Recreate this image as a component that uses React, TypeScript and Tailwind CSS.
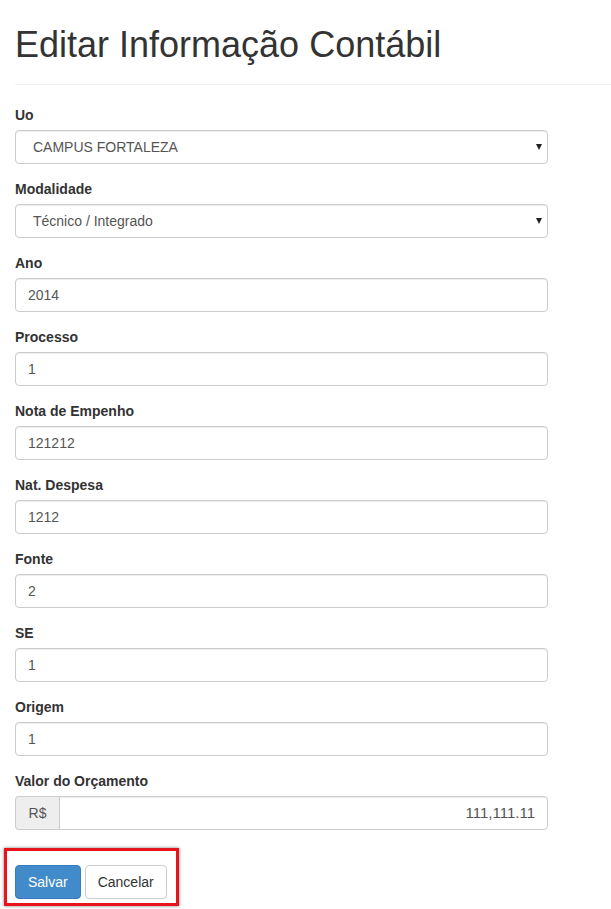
import React from "react";

const fields = [
  { label: "Ano", value: "2014" },
  { label: "Processo", value: "1" },
  { label: "Nota de Empenho", value: "121212" },
  { label: "Nat. Despesa", value: "1212" },
  { label: "Fonte", value: "2" },
  { label: "SE", value: "1" },
  { label: "Origem", value: "1" },
];

const inputCls =
  "block w-full h-[34px] px-3 py-1.5 text-sm text-[#555] bg-white border border-[#ccc] rounded shadow-[inset_0_1px_1px_rgba(0,0,0,0.075)] outline-none";

const Label = ({ children }: { children: React.ReactNode }) => (
  <label className="block mb-[5px] text-sm leading-5 font-bold text-[#333]">
    {children}
  </label>
);

const SelectBox = ({ value }: { value: string }) => (
  <div className="relative">
    <div className={inputCls + " pl-[17px] leading-5"}>{value}</div>
    <svg
      className="absolute right-[6px] top-[14px]"
      width="6"
      height="6"
      viewBox="0 0 6 6"
    >
      <path d="M0 0h6L3 6z" fill="#222" />
    </svg>
  </div>
);

const App = () => {
  return (
    <div
      className="min-h-screen bg-white text-sm text-[#333]"
      style={{ fontFamily: '"Liberation Sans", Arial, sans-serif' }}
    >
      <div className="pl-[15px] pt-[25px]">
        <div className="border-b border-[#eee] pb-[9px]">
          <h1 className="text-[36px] leading-[1.1] font-normal text-[#333] mb-[10px]">
            Editar Informação Contábil
          </h1>
        </div>
      </div>

      <form className="pl-[15px] pt-5 w-[548px]">
        <div className="mb-[15px]">
          <Label>Uo</Label>
          <SelectBox value="CAMPUS FORTALEZA" />
        </div>
        <div className="mb-[15px]">
          <Label>Modalidade</Label>
          <SelectBox value="Técnico / Integrado" />
        </div>

        {fields.map((f) => (
          <div key={f.label} className="mb-[15px]">
            <Label>{f.label}</Label>
            <input className={inputCls} defaultValue={f.value} />
          </div>
        ))}

        <div className="mb-[15px]">
          <Label>Valor do Orçamento</Label>
          <div className="flex">
            <span className="flex items-center justify-center w-[44px] h-[34px] text-sm text-[#555] bg-[#eee] border border-[#ccc] border-r-0 rounded-l">
              R$
            </span>
            <input
              className="flex-1 min-w-0 h-[34px] px-3 py-1.5 text-[15px] text-[#555] text-right bg-white border border-[#ccc] rounded-r shadow-[inset_0_1px_1px_rgba(0,0,0,0.075)] outline-none"
              defaultValue="111,111.11"
            />
          </div>
        </div>
      </form>

      <div className="ml-[4px] mt-[18px] w-[175px] h-[58px] border-[3px] border-[#e8141b] shadow-[0_0_3px_rgba(0,0,0,0.5)] flex items-end gap-1 pl-[8px] pb-[4px]">
        <button className="h-[34px] px-3 text-sm text-white bg-[#428bca] border border-[#357ebd] rounded">
          Salvar
        </button>
        <button className="h-[34px] px-3 text-sm text-[#333] bg-white border border-[#ccc] rounded">
          Cancelar
        </button>
      </div>
    </div>
  );
};

export default App;
